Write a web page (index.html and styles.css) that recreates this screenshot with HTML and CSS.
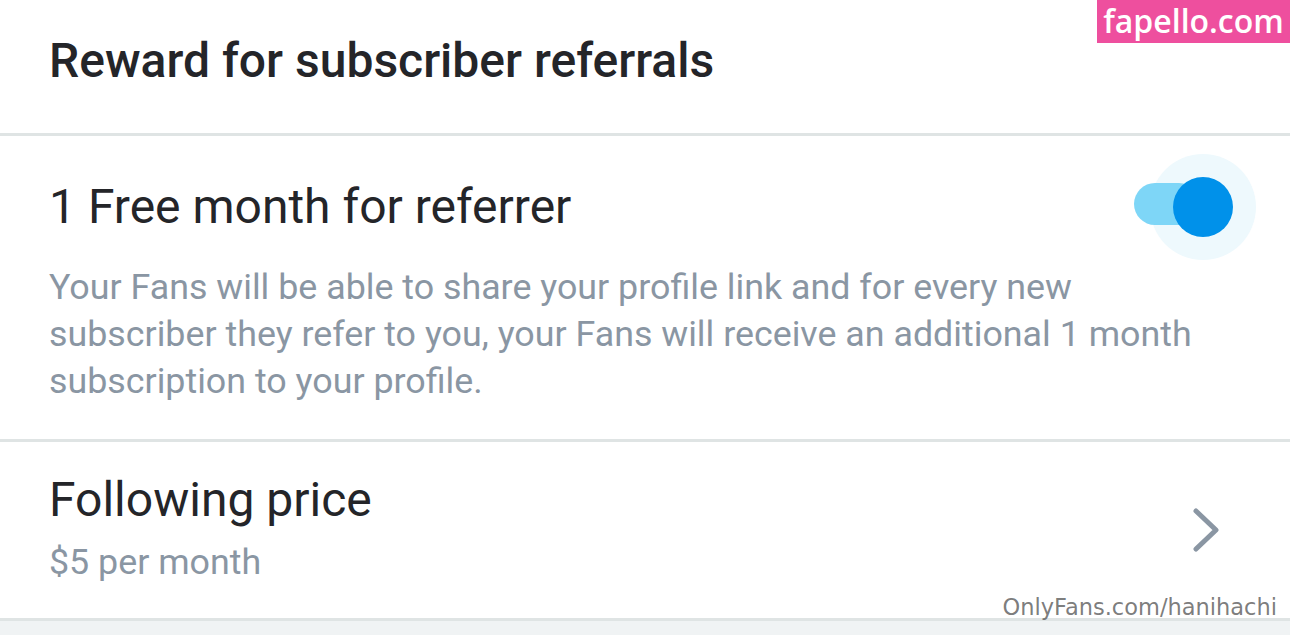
FILE: index.html
```html
<!DOCTYPE html>
<html>
<head>
<meta charset="utf-8">
<link rel="stylesheet" href="styles.css">
</head>
<body>
<div class="page">
  <header class="section-head">
    <h1 class="section-title">Reward for subscriber referrals</h1>
  </header>
  <div class="row row-toggle">
    <div class="row-main">
      <div class="row-title">1 Free month for referrer</div>
      <div class="toggle" role="switch" aria-checked="true">
        <span class="toggle-halo"></span>
        <span class="toggle-track"></span>
        <span class="toggle-knob"></span>
      </div>
    </div>
    <p class="row-desc">Your Fans will be able to share your profile link and for every new subscriber they refer to you, your Fans will receive an additional 1 month subscription to your profile.</p>
  </div>
  <div class="row row-link">
    <div class="row-text">
      <div class="row-title">Following price</div>
      <div class="row-sub">$5 per month</div>
    </div>
    <svg class="chevron" width="30" height="46" viewBox="0 0 30 46"><path d="M4 4 L24 23 L4 42" fill="none" stroke="#8a96a3" stroke-width="5" stroke-linecap="round" stroke-linejoin="round"/></svg>
  </div>
  <div class="footer-gap"></div>
  <div class="wm-fapello">fapello.com</div>
  <div class="wm-of">OnlyFans.com/hanihachi</div>
</div>
</body>
</html>
```
FILE: styles.css
```css
* { box-sizing: border-box; }
html, body { margin: 0; padding: 0; }
body {
  background: #fff;
  font-family: Roboto, "Noto Sans", sans-serif;
  color: #242529;
  width: 1290px;
  height: 635px;
  overflow: hidden;
}
.page { position: relative; width: 1290px; height: 635px; display: flex; flex-direction: column; }
.section-head {
  height: 136px;
  border-bottom: 3px solid #dfe4e4;
  display: flex;
  align-items: center;
  padding: 0 49px 12px;
}
.section-title {
  margin: 0;
  font-size: 48px;
  font-weight: 500;
  letter-spacing: 0;
}
.row-toggle {
  height: 306px;
  border-bottom: 3px solid #dfe4e4;
  padding: 0 49px;
}
.row-main {
  display: flex;
  align-items: flex-start;
  justify-content: space-between;
  height: 128px;
}
.row-main .row-title { margin-top: 43px; }
.row-title {
  font-size: 48px;
  font-weight: 400;
  color: #242529;
  line-height: 56px;
}
.row-desc {
  margin: 0;
  font-size: 35.8px;
  line-height: 47px;
  color: #8a96a3;
  width: 1170px;
}
.toggle {
  position: relative;
  width: 106px;
  height: 106px;
  margin-right: -15px;
  margin-top: 18px;
}
.toggle-halo {
  position: absolute; inset: 0;
  border-radius: 50%;
  background: #eef9fd;
}
.toggle-track {
  position: absolute;
  left: -16px; top: 29px;
  width: 66px; height: 42px;
  border-radius: 21px;
  background: #7ed6f7;
}
.toggle-knob {
  position: absolute;
  left: 23px; top: 23px;
  width: 60px; height: 60px;
  border-radius: 50%;
  background: #0091ea;
}
.row-link {
  height: 179px;
  border-bottom: 3px solid #dfe4e4;
  display: flex;
  align-items: flex-start;
  justify-content: space-between;
  padding: 30px 68px 0 49px;
}
.row-text { display: flex; flex-direction: column; gap: 13px; }
.chevron { align-self: center; margin-top: -30px; }
.row-sub { font-size: 35.8px; color: #8a96a3; line-height: 42px; }
.footer-gap { flex: 1; background: #f0f3f4; }
.wm-fapello {
  position: absolute;
  top: 0; right: 0;
  width: 193px; height: 43px;
  background: #ee4f9e;
  color: #fff;
  font-family: "Open Sans", "Noto Sans", sans-serif;
  font-size: 32px;
  font-weight: 600;
  line-height: 41px;
  text-align: center;
}
.wm-of {
  position: absolute;
  right: 13px; top: 594px;
  font-family: "DejaVu Sans", sans-serif;
  font-size: 22.5px;
  color: rgba(90, 90, 90, 0.8);
}
```
